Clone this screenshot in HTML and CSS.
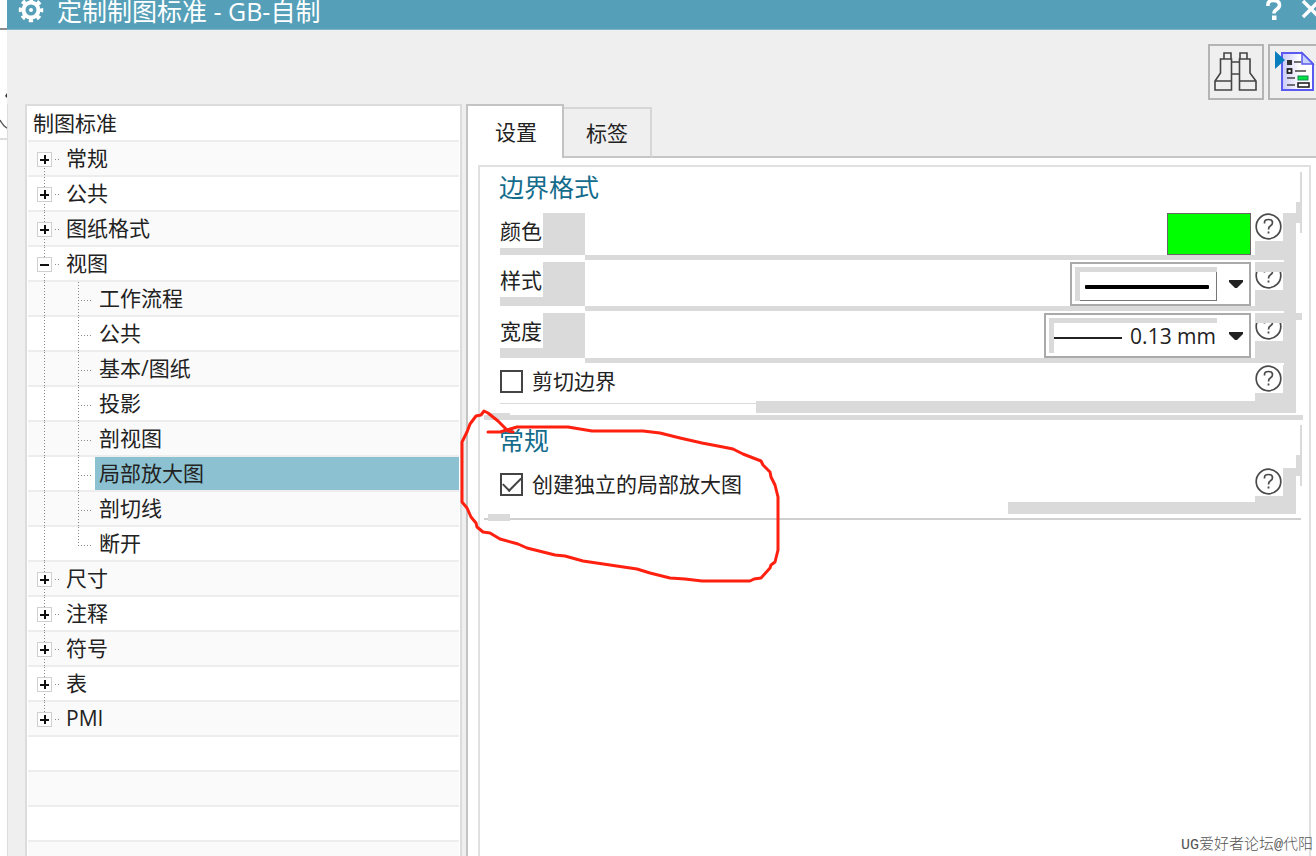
FILE: index.html
```html
<!DOCTYPE html>
<html lang="zh-CN">
<head>
<meta charset="utf-8">
<title>定制制图标准 - GB-自制</title>
<link rel="stylesheet" href="styles.css">
</head>
<body>
<svg width="0" height="0" class="defs" aria-hidden="true">
  <symbol id="help" viewBox="0 0 28 28">
    <circle cx="13.500" cy="13.500" r="12.300" fill="#fff" stroke="#4a4a4a" stroke-width="1.700"/>
    <path d="M9.500 10.500V9.500Q9.500 6.500 13.500 6.500Q17.500 6.500 17.500 9.800Q17.500 11.500 15.500 12.800Q13.500 14 13.500 16.500" fill="none" stroke="#4a4a4a" stroke-width="1.700"/>
    <rect x="12.600" y="18.500" width="1.800" height="2" fill="#4a4a4a"/>
  </symbol>
</svg>
<div class="desktop">
  <svg class="behind" width="7" height="150" aria-hidden="true">
    <path d="M0 29H7" stroke="#8c8c8c" stroke-width="2"/>
    <path d="M7 93L5 96L7 98Z" fill="#333"/>
    <path d="M0 120Q3 126 7 128" fill="none" stroke="#555" stroke-width="1.500"/>
    <path d="M0 139H7" stroke="#ddd" stroke-width="2"/>
  </svg>
  <div class="window">
    <header class="titlebar">
      <svg class="gear" width="26" height="26" viewBox="0 0 26 26" aria-hidden="true">
        <circle cx="13" cy="12" r="7.500" fill="none" stroke="#fff" stroke-width="4"/>
        <circle cx="13" cy="12" r="10.500" fill="none" stroke="#fff" stroke-width="3.500" stroke-dasharray="4.200 4.047" stroke-dashoffset="2.100"/>
        <circle cx="13" cy="12" r="2" fill="#fff"/>
      </svg>
      <h1 class="caption">定制制图标准 - GB-自制</h1>
      <button class="title-btn" aria-label="帮助">
        <svg width="20" height="26" viewBox="0 0 20 26"><path d="M4 8V6Q4 2.500 9.500 2.500Q15.500 2.500 15.500 7Q15.500 9.500 12.500 11.500Q10 13.200 10 15.500" fill="none" stroke="#fff" stroke-width="3.600"/><rect x="8" y="17.500" width="4.500" height="4.500" fill="#fff"/></svg>
      </button>
      <button class="title-btn" aria-label="关闭">
        <svg width="20" height="26" viewBox="0 0 20 26"><path d="M2 3L18 19M18 3L2 19" stroke="#fff" stroke-width="3.500"/></svg>
      </button>
    </header>
    <div class="toolbar">
      <button class="tool" aria-label="查找">
        <svg width="44" height="44" viewBox="0 0 44 44" fill="none" stroke="#444" stroke-width="1.600">
          <path d="M10 9V3H17V9M26 9V3H33V9M6.500 9H17.500V40H1V31L6.500 23ZM36 9H25.500V40H42V31L36 23ZM1 31H17.500M25.500 31H42M17.500 12H25.500M17.500 24H25.500"/>
        </svg>
      </button>
      <button class="tool" aria-label="设置来源">
        <svg width="44" height="44" viewBox="0 0 44 44">
          <defs><linearGradient id="page" x2="1"><stop offset="0" stop-color="#c9c9f7"/><stop offset=".6" stop-color="#fff"/></linearGradient></defs>
          <path d="M8 3H28L39 14V40H8Z" fill="url(#page)" stroke="#5a5af0" stroke-width="2"/>
          <path d="M28 3V14H39Z" fill="#c9d4fb" stroke="#5a5af0" stroke-width="1.500"/>
          <path d="M1 1L11 10L1 19Z" fill="#087dbd"/>
          <rect x="13" y="10" width="5" height="5" fill="#333"/>
          <rect x="13.500" y="19" width="4" height="4" fill="#fff" stroke="#222" stroke-width="1.800"/>
          <path d="M20 12H27M21 21H32M13 28H21M13 35H21" stroke="#444" stroke-width="1.500"/>
          <rect x="24" y="26" width="10" height="4" fill="#00e640" stroke="#185" stroke-width="1"/>
          <rect x="24" y="33" width="11" height="4" fill="#fff" stroke="#222" stroke-width="1.600"/>
        </svg>
      </button>
    </div>
    <div class="content">
      <nav class="tree">
        <h2 class="tree-head">制图标准</h2>
        <ul class="nodes">
          <li><div class="node first"><button class="toggle" aria-label="展开 常规"></button><span class="stub"></span><span class="name">常规</span></div></li>
          <li><div class="node"><button class="toggle" aria-label="展开 公共"></button><span class="stub"></span><span class="name">公共</span></div></li>
          <li><div class="node"><button class="toggle" aria-label="展开 图纸格式"></button><span class="stub"></span><span class="name">图纸格式</span></div></li>
          <li>
            <div class="node"><button class="toggle open" aria-label="折叠 视图"></button><span class="stub"></span><span class="name">视图</span></div>
            <ul class="children">
              <li class="child"><span class="branch"></span><span class="leaf">工作流程</span></li>
              <li class="child"><span class="branch"></span><span class="leaf">公共</span></li>
              <li class="child"><span class="branch"></span><span class="leaf">基本/图纸</span></li>
              <li class="child"><span class="branch"></span><span class="leaf">投影</span></li>
              <li class="child"><span class="branch"></span><span class="leaf">剖视图</span></li>
              <li class="child"><span class="branch"></span><span class="leaf selected">局部放大图</span></li>
              <li class="child"><span class="branch"></span><span class="leaf">剖切线</span></li>
              <li class="child"><span class="branch end"></span><span class="leaf">断开</span></li>
            </ul>
          </li>
          <li><div class="node"><button class="toggle" aria-label="展开 尺寸"></button><span class="stub"></span><span class="name">尺寸</span></div></li>
          <li><div class="node"><button class="toggle" aria-label="展开 注释"></button><span class="stub"></span><span class="name">注释</span></div></li>
          <li><div class="node"><button class="toggle" aria-label="展开 符号"></button><span class="stub"></span><span class="name">符号</span></div></li>
          <li><div class="node"><button class="toggle" aria-label="展开 表"></button><span class="stub"></span><span class="name">表</span></div></li>
          <li><div class="node last"><button class="toggle" aria-label="展开 PMI"></button><span class="stub"></span><span class="name">PMI</span></div></li>
        </ul>
      </nav>
      <main class="pane">
        <div class="tabs" role="tablist">
          <button class="tab active" role="tab" aria-selected="true">设置</button>
          <button class="tab" role="tab" aria-selected="false">标签</button>
        </div>
        <div class="panel">
          <section class="group">
            <h3 class="group-title">边界格式</h3>
            <div class="rows">
              <div class="row">
                <div class="label-cell"><label class="label" for="color">颜色</label></div>
                <div class="field"><button class="swatch" id="color" aria-label="颜色"></button></div>
                <div class="help-cell"><button class="help" aria-label="帮助"><svg width="28" height="28"><use href="#help"/></svg></button></div>
              </div>
              <div class="row tall">
                <div class="label-cell"><label class="label" for="style">样式</label></div>
                <div class="field">
                  <div class="combo style-combo">
                    <div class="sample focus"><svg width="124" height="4" aria-hidden="true"><rect width="124" height="4" rx="1" fill="#000"/></svg></div>
                    <select class="select" id="style"><option aria-label="实线"></option></select>
                    <svg class="arrow" width="14" height="8" aria-hidden="true"><path d="M0 0H14V2L8 8H6L0 2Z" fill="#222"/></svg>
                  </div>
                </div>
                <div class="help-cell clipped"><button class="help" aria-label="帮助"><svg width="28" height="28"><use href="#help"/></svg></button></div>
              </div>
              <div class="row taller">
                <div class="label-cell"><label class="label" for="width">宽度</label></div>
                <div class="field">
                  <div class="combo width-combo">
                    <div class="sample"><svg width="68" height="2" aria-hidden="true"><rect width="68" height="2" fill="#222"/></svg></div>
                    <select class="select" id="width"><option>0.13 mm</option></select>
                    <svg class="arrow" width="14" height="8" aria-hidden="true"><path d="M0 0H14V2L8 8H6L0 2Z" fill="#222"/></svg>
                  </div>
                </div>
                <div class="help-cell clipped"><button class="help" aria-label="帮助"><svg width="28" height="28"><use href="#help"/></svg></button></div>
              </div>
              <div class="row check-row">
                <label class="check"><input type="checkbox" class="box">剪切边界</label>
                <div class="help-cell"><button class="help" aria-label="帮助"><svg width="28" height="28"><use href="#help"/></svg></button></div>
              </div>
              <div class="foot"><span class="foot-line"></span><span class="foot-bar"></span></div>
            </div>
            <div class="gutter"></div>
            <div class="rail rail-long"></div>
          </section>
          <div class="divider thick"></div>
          <section class="group second">
            <h3 class="group-title">常规</h3>
            <div class="rows">
              <div class="row check-row">
                <label class="check"><input type="checkbox" class="box" checked>创建独立的局部放大图</label>
                <div class="help-cell"><button class="help" aria-label="帮助"><svg width="28" height="28"><use href="#help"/></svg></button></div>
              </div>
              <div class="foot"><span class="foot-line plain"></span><span class="foot-bar"></span></div>
            </div>
            <div class="gutter"></div>
            <div class="rail"></div>
          </section>
          <div class="divider"></div>
        </div>
      </main>
    </div>
  </div>
</div>
<svg class="markup" width="330" height="190" viewBox="455 400 330 190" aria-hidden="true">
  <polyline fill="none" stroke="#ff2010" stroke-width="3" stroke-linejoin="round" stroke-linecap="round" points="488,432 500,432 517,427 568,427 592,431 643,431 660,433 680,438 702,443 723,447 733,449 743,454 761,461 763,465 770,472 771,477 775,485 778,497 778,550 775,562 771,565 770,568 761,578 754,579 750,581 702,581 685,579 670,578 650,573 637,569 583,561 565,556 555,555 543,552 527,548 518,544 500,539 490,533 483,532 477,527 476,523 471,517 467,508 462,502 462,442 467,432 470,424 476,416 481,415 484,411 488,413 493,417 498,421 508,431 513,432 506,430"/>
</svg>
<div class="watermark">UG爱好者论坛@代阳</div>
</body>
</html>
```
FILE: styles.css
```css
* { box-sizing: border-box; }

body {
  margin: 0;
  background: #fff;
  color: #222;
  font: 21px/32px "Open Sans", "Noto Sans CJK SC", sans-serif;
  overflow: hidden;
}

button, select, input { font: inherit; color: inherit; margin: 0; padding: 0; }
button { border: 0; background: none; }
ul { list-style: none; margin: 0; padding: 0; }
h1, h2, h3 { margin: 0; font-weight: 400; }
svg { display: block; }
.defs { position: absolute; }

.desktop { display: flex; height: 100vh; }
.behind { flex: none; }

.window {
  flex: 1;
  min-width: 0;
  display: flex;
  flex-direction: column;
  background: #efefef;
}

.titlebar {
  display: flex;
  align-items: center;
  height: 30px;
  padding: 0 0 7px 11px;
  margin-right: -5px;
  background: #559fb8;
  border-bottom: 1px solid #7fb3c6;
  flex: none;
}
.gear { flex: none; }
.caption {
  flex: 1;
  margin-left: 13px;
  color: #fff;
  font-size: 25px;
  line-height: 22px;
  white-space: nowrap;
}
.title-btn { margin-left: 17px; }

.toolbar {
  display: flex;
  justify-content: flex-end;
  gap: 4px;
  height: 74px;
  padding-top: 14px;
  margin-right: -8px;
  flex: none;
}
.tool {
  display: grid;
  place-items: center;
  width: 56px;
  height: 56px;
  border: 2px solid #b4b4b4;
}

.content {
  flex: 1;
  min-height: 0;
  display: flex;
  gap: 4px;
  padding-left: 17px;
  border-left: 1px solid #dcdcdc;
}

.tree {
  width: 437px;
  flex: none;
  display: flex;
  flex-direction: column;
  padding: 0 1px;
  background: #fff;
  border: 2px solid #dcdcdc;
  border-bottom: 0;
  overflow: hidden;
}
.tree-head {
  height: 36px;
  padding-left: 5px;
  font-size: 21px;
  line-height: 34px;
  border-bottom: 2px solid #ededed;
  flex: none;
}
.nodes {
  flex: 1;
  background: repeating-linear-gradient(#fafafa 0 33px, #ededed 33px 35px, #fff 35px 68px, #ededed 68px 70px);
}
.node, .child {
  display: flex;
  align-items: center;
  height: 35px;
  padding-left: 9px;
  background: repeating-linear-gradient(#888 0 1px, transparent 1px 3px) 16px 0 / 1px 100% no-repeat;
}
.node.first { background-position: 16px 17px; }
.node.last { background-size: 1px 17px; }
.toggle {
  width: 15px;
  height: 15px;
  border: 1px solid #d0d0d0;
  background:
    linear-gradient(#111, #111) center / 9px 2px no-repeat,
    linear-gradient(#111, #111) center / 2px 9px no-repeat,
    #fff;
}
.toggle.open { background: linear-gradient(#111, #111) center / 9px 2px no-repeat, #fff; }
.stub {
  width: 6px;
  height: 1px;
  margin: 0 5px 0 3px;
  background: repeating-linear-gradient(90deg, #888 0 1px, transparent 1px 3px);
}
.name { padding-bottom: 4px; }
.child { padding-left: 50px; }
.branch {
  align-self: stretch;
  width: 15px;
  background:
    repeating-linear-gradient(#888 0 1px, transparent 1px 3px) 0 0 / 1px 100% no-repeat,
    repeating-linear-gradient(90deg, #888 0 1px, transparent 1px 3px) 0 18px / 100% 1px no-repeat;
}
.branch.end { background-size: 1px 18px, 100% 1px; }
.leaf {
  flex: 1;
  height: 33px;
  margin: 0 0 2px 2px;
  padding-left: 4px;
}
.leaf.selected { background: #8bc1d0; }

.pane {
  flex: 1;
  min-width: 0;
  display: flex;
  flex-direction: column;
  background: #fff;
  border-left: 2px solid #c3c3c3;
}
.tabs {
  display: flex;
  align-items: flex-end;
  height: 54px;
  background: #efefef;
  box-shadow: inset 0 -2px #c6c6c6;
  flex: none;
}
.tab {
  width: 88px;
  height: 51px;
  border: 2px solid #d6d6d6;
  border-left: 0;
  border-bottom-color: #c6c6c6;
}
.tab.active {
  width: 96px;
  height: 54px;
  padding-left: 2px;
  background: #fff;
  border-color: #c3c3c3;
  border-bottom: 0;
}

.panel {
  flex: 1;
  min-height: 0;
  margin: 7px 5px 0 10px;
  border: 2px solid #e0e0e0;
  border-bottom: 0;
}
.group {
  display: grid;
  grid-template-columns: minmax(0, 1fr) 12px 6px;
  grid-template-rows: 46px auto;
  padding: 0 7px 0 20px;
}
.group.second { grid-template-rows: 48px auto; }
.group-title {
  grid-area: 1 / 1;
  margin-left: -1px;
  color: #146c8c;
  font-size: 25px;
  line-height: 40px;
}
.rows { grid-area: 2 / 1; }
.gutter { grid-area: 2 / 2; background: #dadada; }
.rail {
  grid-area: 1 / 3 / 3 / 4;
  background:
    linear-gradient(#dadada, #dadada) 0 35px / 6px 21px no-repeat,
    linear-gradient(#dadada, #dadada) 4px 5px / 2px 61px no-repeat;
}
.rail-long {
  background:
    linear-gradient(#dadada, #dadada) 0 35px / 6px 21px no-repeat,
    linear-gradient(#dadada, #dadada) 4px 5px / 2px 61px no-repeat,
    linear-gradient(#dadada, #dadada) 0 146px / 6px 7px no-repeat;
}

.row {
  display: grid;
  grid-template-columns: 85px 1fr 29px;
  height: 47px;
  margin-bottom: 2px;
}
.row.tall { height: 49px; }
.row.taller { height: 50px; }
.label-cell {
  margin-bottom: 5px;
  background: #dadada;
}
.label {
  display: block;
  width: 43px;
  height: 35px;
  line-height: 36px;
  background: #fff;
}
.field {
  display: flex;
  justify-content: flex-end;
  padding-right: 4px;
  border-bottom: 5px solid #dadada;
}
.swatch {
  width: 84px;
  background: #0f0;
  border: 1px solid #666;
}
.help-cell {
  background: #dadada;
  overflow: hidden;
}
.help {
  display: flex;
  align-items: flex-end;
  width: 28px;
  height: 28px;
  background: #fff;
  overflow: hidden;
}
.clipped { padding-top: 10px; }
.clipped .help { height: 18px; }

.combo {
  display: grid;
  grid-template-columns: 1fr 32px;
  border: 2px solid #aaa;
  background: #fff;
}
.style-combo { width: 181px; }
.width-combo { width: 207px; }
.sample {
  grid-area: 1 / 1;
  display: flex;
  align-items: center;
  margin: 3px 0 3px 3px;
  border: solid #dadada;
  border-width: 5px 0 0 5px;
}
.focus {
  padding-left: 5px;
  box-shadow: inset -1px -1px #777;
}
.select {
  grid-area: 1 / 1 / 2 / 3;
  appearance: none;
  border: 0;
  background: none;
  padding-right: 33px;
  text-align: right;
  text-align-last: right;
}
.arrow {
  grid-area: 1 / 2;
  place-self: center end;
  margin-right: 6px;
  pointer-events: none;
}

.check-row {
  grid-template-columns: 1fr 29px;
  height: 36px;
  margin-bottom: 0;
}
.second .check-row { height: 34px; }
.check {
  display: flex;
  align-items: center;
  gap: 9px;
  height: 32px;
}
.box {
  appearance: none;
  width: 23px;
  height: 23px;
  border: 2px solid #444;
  background: #fff;
  display: grid;
  place-items: center;
}
.box:checked::before {
  content: "";
  width: 16px;
  height: 8px;
  border: solid #444;
  border-width: 0 0 2px 2px;
  transform: translateY(-2px) rotate(-45deg);
}
.foot { display: flex; height: 12px; }
.foot-line {
  width: 256px;
  height: 3px;
  border-bottom: 1px solid #dadada;
}
.foot-line.plain { width: 508px; border: 0; }
.foot-bar { flex: 1; background: #dadada; }

.divider {
  height: 7px;
  margin: 0 8px 0 4px;
  background:
    linear-gradient(#dadada, #dadada) 4px 0 / 22px 100% no-repeat,
    linear-gradient(#d0d0d0, #d0d0d0) 0 4px / 100% 2px no-repeat;
}
.divider.thick {
  margin-right: 6px;
  background:
    linear-gradient(#dadada, #dadada) 4px 0 / 22px 100% no-repeat,
    linear-gradient(#dadada, #dadada) 0 2px / 100% 5px no-repeat;
}

.markup {
  position: absolute;
  left: 455px;
  top: 400px;
  pointer-events: none;
}
.watermark {
  position: absolute;
  right: 3px;
  bottom: 0;
  color: #555;
  font: 300 15px/20px "Liberation Mono", "Noto Sans CJK SC", monospace;
}
```
